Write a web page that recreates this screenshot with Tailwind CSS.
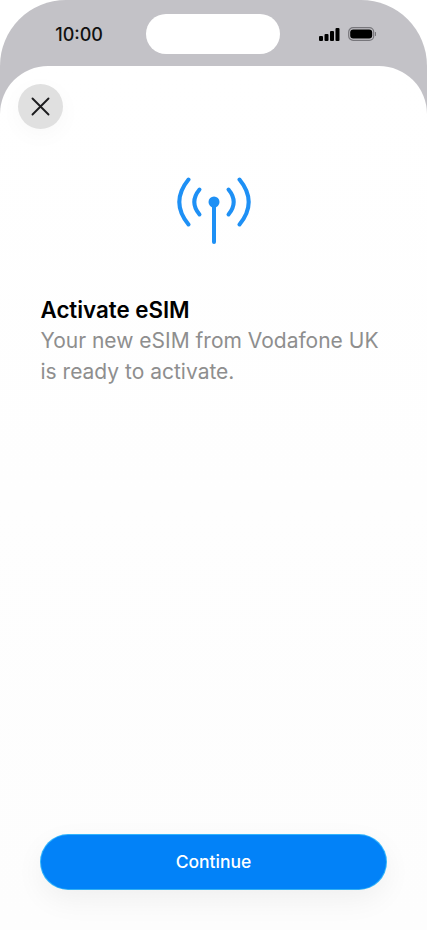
<!DOCTYPE html>
<html lang="en">
  <head>
    <meta charset="UTF-8" />
    <title>Activate eSIM</title>
    <meta name="viewport" content="width=device-width, initial-scale=1.0" />
    <script src="https://cdn.jsdelivr.net/npm/@tailwindcss/browser@4"></script>
  </head>
  <body class="bg-white font-['Inter',sans-serif]">
    <div class="h-[930px] w-[427px] overflow-hidden bg-white">
      <div class="flex h-full flex-col rounded-t-[66px] bg-[#c3c2c7]">

        <!-- Status bar -->
        <header class="flex h-[66px] shrink-0 items-start pt-[14px]">
          <div class="flex h-[40px] w-[146px] items-center justify-end pr-[43px] text-[18px] font-medium text-[#111]">10:00</div>
          <div class="h-[40px] w-[134px] rounded-[20px] bg-white"></div>
          <div class="flex h-[40px] items-center gap-[8px] pl-[39px]">
            <svg width="21" height="14" viewBox="0 0 21 14" fill="#000">
              <rect x="0" y="9" width="4" height="5" rx="1" />
              <rect x="5.5" y="7" width="4" height="7" rx="1" />
              <rect x="11" y="4" width="4" height="10" rx="1" />
              <rect x="16.5" y="1" width="4" height="13" rx="1" />
            </svg>
            <svg width="28" height="14" viewBox="0 0 28 14" fill="none">
              <rect x="0.7" y="0.7" width="25" height="12.6" rx="4.4" stroke="#77767b" stroke-width="1.2" />
              <rect x="2.2" y="2.4" width="22" height="9.2" rx="3" fill="#000" />
              <path d="M27.5 5.5v3" stroke="#77767b" stroke-width="1" stroke-linecap="round" />
            </svg>
          </div>
        </header>

        <!-- Sheet -->
        <main class="flex flex-1 flex-col rounded-t-[48px] bg-gradient-to-b from-white to-[#fdfdfd] pb-[41px]">
          <div class="pl-[18px] pt-[18px]">
            <button class="flex h-[45px] w-[45px] items-center justify-center rounded-full bg-[#e0e0e0] shadow-[0_6px_24px_rgba(0,0,0,0.03)]">
              <svg width="20" height="20" viewBox="0 0 20 20" fill="none" stroke="#1c1c1e" stroke-width="1.9" stroke-linecap="round">
                <path d="M1.5 1.5l16 16M17.5 1.5l-16 16" />
              </svg>
            </button>
          </div>

          <div class="mt-[47px] flex justify-center">
            <svg width="76" height="70" viewBox="0 0 76 70" fill="none" stroke="#1e90f5" stroke-width="4" stroke-linecap="round">
              <path d="M12.5 3.5Q-5.9 26 12.5 48.5" />
              <path d="M63.5 3.5Q81.9 26 63.5 48.5" />
              <path d="M23.5 13.5Q13.1 26 23.5 38.5" />
              <path d="M52.5 13.5Q62.9 26 52.5 38.5" />
              <path d="M38 26V66" />
              <circle cx="38" cy="26" r="5.5" fill="#1e90f5" stroke="none" />
            </svg>
          </div>

          <div class="mt-[49px] pl-[40.5px] pr-[41px]">
            <h1 class="text-[22.3px] leading-[30px] font-semibold text-black">Activate eSIM</h1>
            <p class="text-[21px] leading-[31px] text-[#8e8e8e]">Your new eSIM from Vodafone UK is ready to activate.</p>
          </div>

          <div class="mt-auto px-[41px]">
            <button class="h-[54px] w-[345px] rounded-[27px] bg-[#0282f8] text-[17.5px] font-medium text-white shadow-[0_10px_30px_rgba(0,0,0,0.06),0_0_0_1px_#33b8ff]">Continue</button>
          </div>
        </main>
      </div>
    </div>
  </body>
</html>
